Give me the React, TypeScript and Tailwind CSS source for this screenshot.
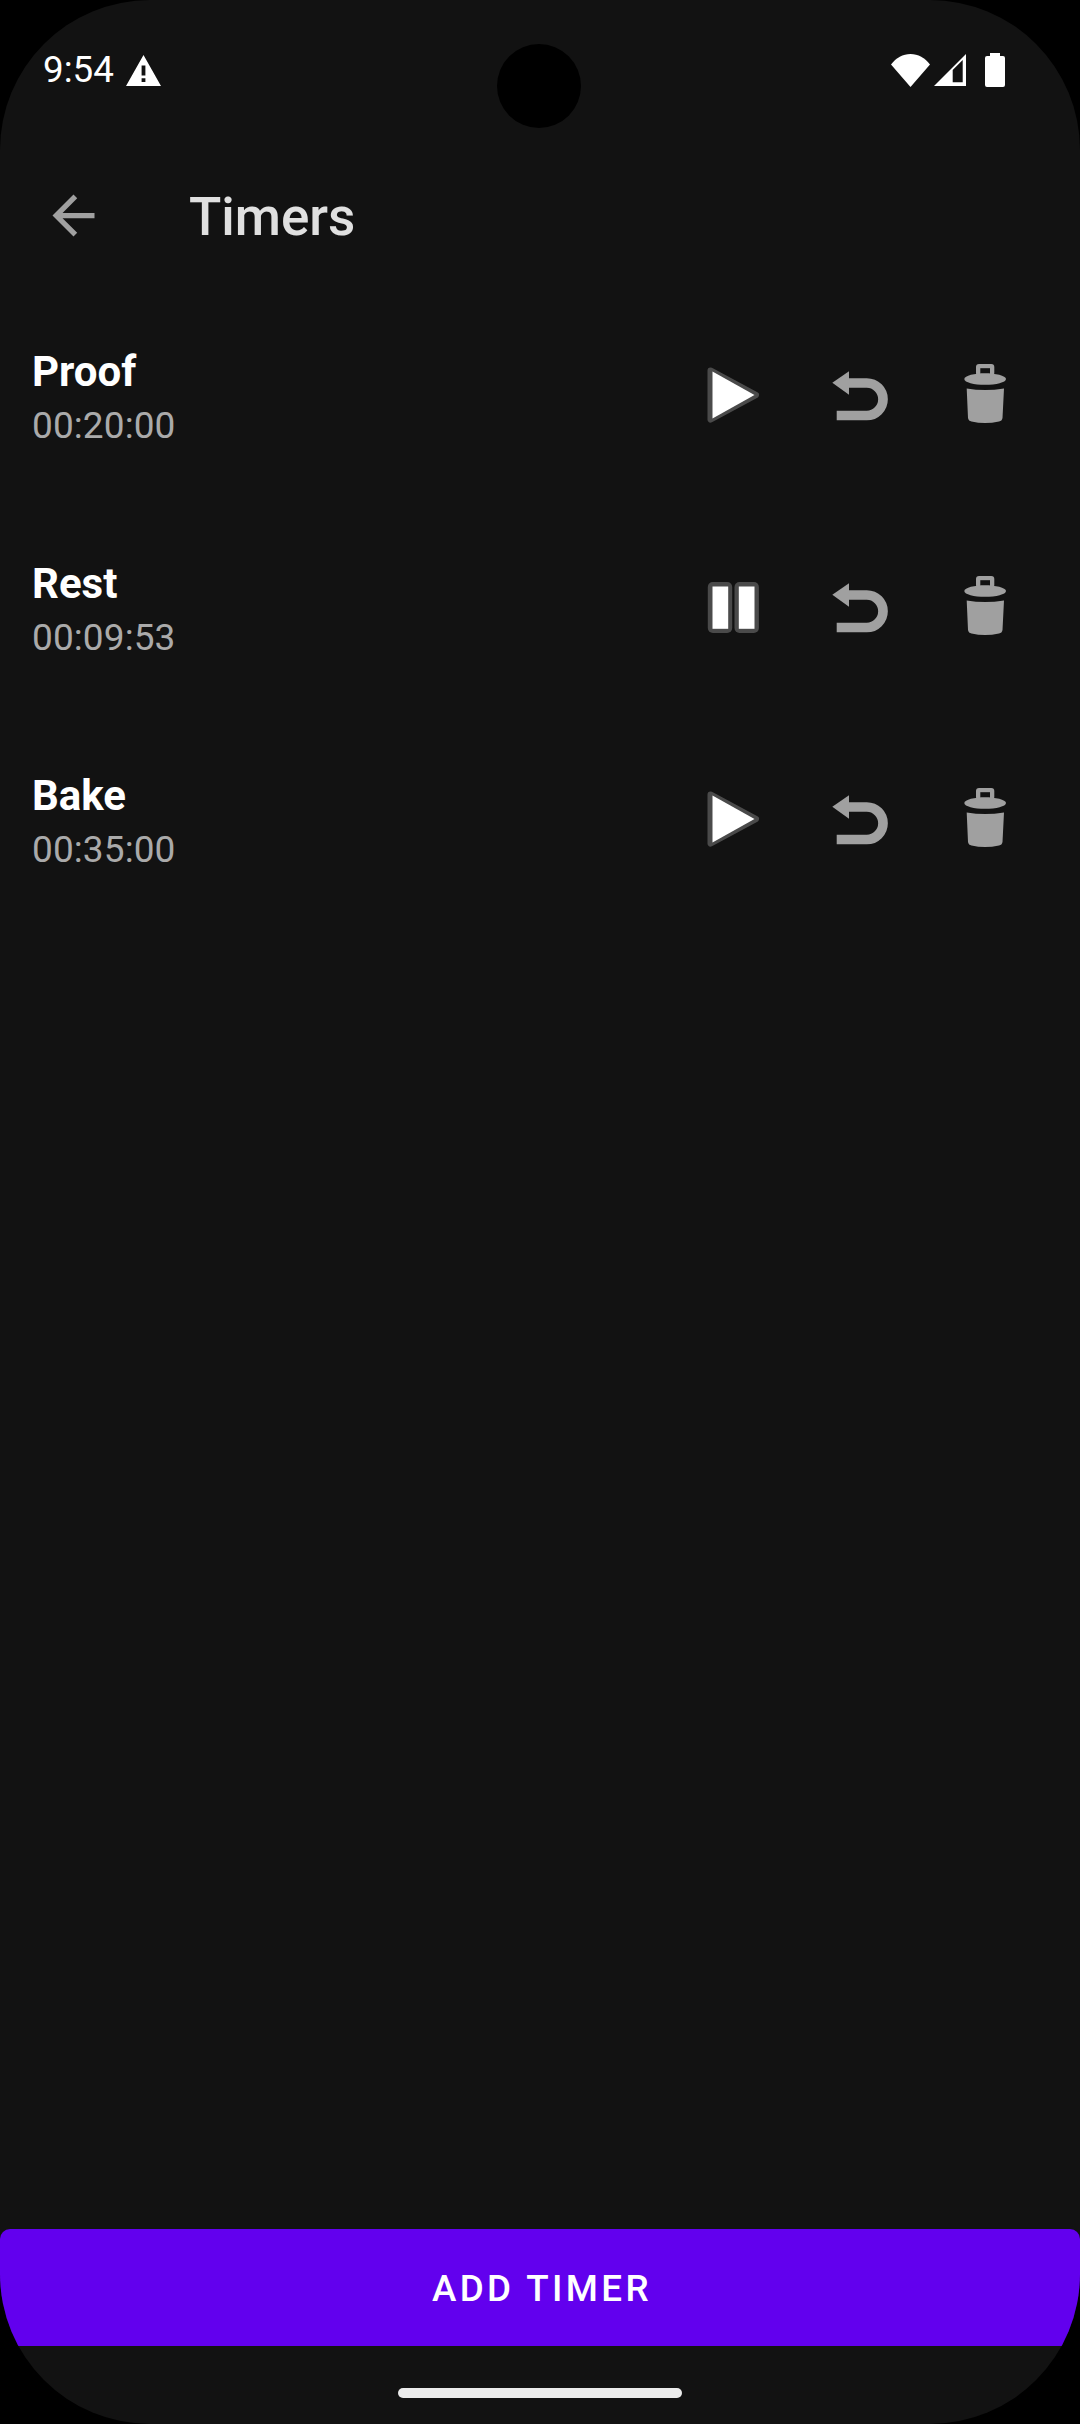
const GRAY = "#a0a0a0";
const BG = "#121212";
const OUTLINE = "#4a4a4a";

function PlayIcon() {
  return (
    <svg width="63" height="63" viewBox="0 0 63 63">
      <polygon points="8.5,6.5 54,31 8.5,55.5" fill={OUTLINE} stroke={OUTLINE} strokeWidth="6" strokeLinejoin="round" />
      <polygon points="10.5,7.5 52.5,31 10.5,54.5" fill="#ffffff" />
    </svg>
  );
}

function PauseIcon() {
  return (
    <svg width="63" height="63" viewBox="0 0 63 63">
      <rect x="5.8" y="6" width="24.4" height="51" rx="5" fill={OUTLINE} />
      <rect x="32.5" y="6" width="24.4" height="51" rx="5" fill={OUTLINE} />
      <rect x="10.5" y="10.5" width="15.7" height="42.3" fill="#ffffff" />
      <rect x="36.8" y="10.5" width="15.7" height="42.3" fill="#ffffff" />
    </svg>
  );
}

function UndoIcon() {
  return (
    <svg width="63" height="63" viewBox="1 0 63 63">
      <path d="M22 19H39.75A16.25 16.25 0 0 1 39.75 51.5H9.7" fill="none" stroke={GRAY} strokeWidth="9.7" />
      <polygon points="5.3,18.8 22,7.2 22,30.8" fill={GRAY} />
    </svg>
  );
}

function TrashIcon() {
  return (
    <svg width="63" height="63" viewBox="1 0 63 63">
      <rect x="23" y="0" width="18.3" height="12" rx="3" fill={GRAY} />
      <rect x="27.3" y="4.2" width="9.7" height="7" fill={BG} />
      <path d="M11.3 15C11.3 11.5 22 9.2 32 9.2S53 11.5 53 15C53 18.5 43 20.8 32 20.8S11.3 18.5 11.3 15Z" fill={GRAY} />
      <path d="M13.7 24.5Q32 27.5 51 24.5L49.5 54Q49 57 46 57.5Q32 60.5 18.5 57.5Q15.5 57 15 54Z" fill={GRAY} />
    </svg>
  );
}

function TimerRow({ name, time, running }: { name: string; time: string; running?: boolean }) {
  return (
    <div className="flex h-[212px] items-center pl-[32px] pr-[32px]">
      <div className="flex flex-1 flex-col gap-[4.5px] pt-[6px]">
        <span className="text-[42px] leading-[50px] font-bold text-white">{name}</span>
        <span className="text-[37px] leading-[50px] tracking-[0.1px] text-[#aaaaaa]">{time}</span>
      </div>
      <div className="flex pb-[2px]">
        <div className="flex h-[126px] w-[126px] items-center justify-center">{running ? <PauseIcon /> : <PlayIcon />}</div>
        <div className="flex h-[126px] w-[126px] items-center justify-center"><UndoIcon /></div>
        <div className="flex h-[126px] w-[126px] items-center justify-center"><TrashIcon /></div>
      </div>
    </div>
  );
}

export default function App() {
  return (
    <div className="h-[2424px] w-[1080px] bg-black font-['Roboto',sans-serif]">
      <div className="relative flex h-full w-full flex-col overflow-hidden rounded-[150px] bg-[#121212]">
        <div className="absolute left-[497px] top-[44px] h-[84px] w-[84px] rounded-full bg-black" />

        <div className="flex h-[140px] shrink-0 items-center justify-between pl-[43px] pr-[75px]">
          <div className="flex items-center gap-[12px]">
            <span className="text-[36.75px] leading-[44px] text-white">9:54</span>
            <svg width="35" height="31" viewBox="0 0 35 31">
              <path fillRule="evenodd" d="M17.5 0L35 31H0ZM15.6 10.5H19.4V20.5H15.6ZM15.6 23.3H19.4V27H15.6Z" fill="#ffffff" />
            </svg>
          </div>
          <div className="flex items-center">
            <svg width="39" height="33" viewBox="0 0 39 33">
              <path d="M0 10.5C5 4 12 0 19.5 0S34 4 39 10.5L19.5 33Z" fill="#ffffff" />
            </svg>
            <svg className="ml-[4px]" width="32" height="32" viewBox="0 0 32 32">
              <path fillRule="evenodd" d="M32 0V32H0ZM18.7 16V28.3H28.7V6Z" fill="#ffffff" />
            </svg>
            <svg className="ml-[19px]" width="20" height="34" viewBox="0 0 20 34">
              <path d="M5 0H15V3H18Q20 3 20 5V32Q20 34 18 34H2Q0 34 0 32V5Q0 3 2 3H5Z" fill="#ffffff" />
            </svg>
          </div>
        </div>

        <div className="flex h-[150px] shrink-0 items-center pl-[42px]">
          <svg width="63" height="63" viewBox="0 0 24 24">
            <path d="M20 11H7.83l5.59-5.59L12 4l-8 8 8 8 1.41-1.41L7.83 13H20v-2z" fill={GRAY} />
          </svg>
          <span className="ml-[84px] pt-[3px] text-[53px] leading-[62px] font-medium text-[#e0e0e0]">Timers</span>
        </div>

        <div className="flex flex-1 flex-col">
          <TimerRow name="Proof" time="00:20:00" />
          <TimerRow name="Rest" time="00:09:53" running />
          <TimerRow name="Bake" time="00:35:00" />
        </div>

        <button className="flex h-[117px] w-full shrink-0 items-center justify-center rounded-t-[10px] bg-[#6200ee] pt-[3px] pl-[4px] text-[36.75px] font-medium tracking-[3.4px] text-white">
          ADD TIMER
        </button>

        <div className="flex h-[78px] shrink-0 justify-center pt-[42px]">
          <div className="h-[10px] w-[284px] rounded-full bg-[#ebebeb]" />
        </div>
      </div>
    </div>
  );
}
